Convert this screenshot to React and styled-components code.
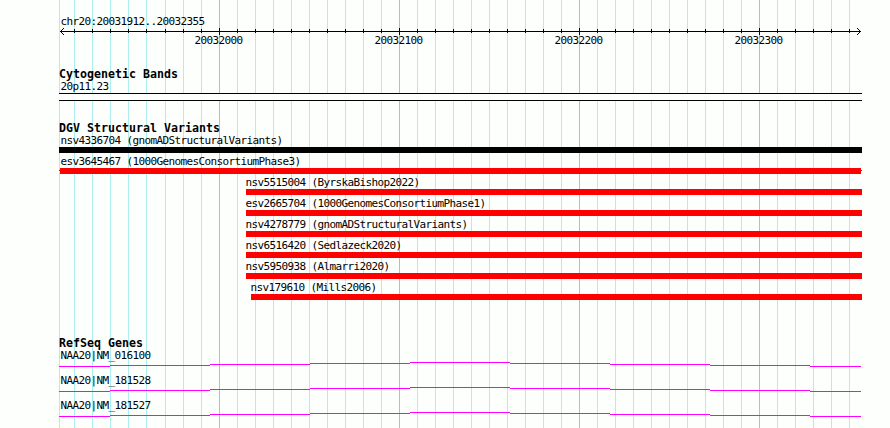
// App.jsx
import React from 'react';
import styled, { createGlobalStyle } from 'styled-components';

const LEFT = 59;
const RIGHT = 862;

const MINOR_TICKS = [
  74, 92, 110, 128, 146, 165, 183, 201, 237, 255, 273, 291, 309, 327, 345, 363,
  381, 417, 435, 453, 471, 489, 507, 525, 543, 561, 597, 615, 633, 651, 669,
  687, 705, 723, 741, 777, 795, 813, 831, 849,
];

const MAJOR_TICKS = [
  { x: 219, label: '20032000' },
  { x: 399, label: '20032100' },
  { x: 579, label: '20032200' },
  { x: 759, label: '20032300' },
];

const VARIANTS = [
  { name: 'nsv4336704', study: 'gnomADStructuralVariants', start: 59, color: '#000000' },
  { name: 'esv3645467', study: '1000GenomesConsortiumPhase3', start: 59, clipped: true },
  { name: 'nsv5515004', study: 'ByrskaBishop2022', start: 246 },
  { name: 'esv2665704', study: '1000GenomesConsortiumPhase1', start: 246 },
  { name: 'nsv4278779', study: 'gnomADStructuralVariants', start: 246 },
  { name: 'nsv6516420', study: 'Sedlazeck2020', start: 246 },
  { name: 'nsv5950938', study: 'Almarri2020', start: 246 },
  { name: 'nsv179610', study: 'Mills2006', start: 251 },
];

const GENES = ['NAA20|NM_016100', 'NAA20|NM_181528', 'NAA20|NM_181527'];

// each step of the intron line: [from, to, y]
const INTRON_STEPS = [
  [59, 110, 4],
  [110, 210, 3],
  [210, 310, 2],
  [310, 410, 1],
  [410, 510, 0],
  [510, 610, 1],
  [610, 710, 2],
  [710, 810, 3],
  [810, 861, 4],
];

const GridLines = () => (
  <GridLayer width="890" height="428" shapeRendering="crispEdges">
    {[LEFT, ...MINOR_TICKS].map((x) => (
      <rect key={x} x={x} y="0" width="1" height="428" fill="#afeeee" />
    ))}
    {MAJOR_TICKS.map(({ x }) => (
      <rect key={x} x={x} y="0" width="1" height="428" fill="#87ceeb" />
    ))}
  </GridLayer>
);

const Ruler = () => (
  <RulerBox>
    <Label>chr20:20031912..20032355</Label>
    <Axis
      width={RIGHT - LEFT}
      height="7"
      viewBox={`${LEFT} 0 ${RIGHT - LEFT} 7`}
      shapeRendering="crispEdges"
    >
      <rect x="60" y="3" width="801" height="1" />
      {MINOR_TICKS.map((x) => (
        <rect key={x} x={x} y="1" width="1" height="4" />
      ))}
      {MAJOR_TICKS.map(({ x }) => (
        <rect key={x} x={x} y="0" width="1" height="7" />
      ))}
      {[1, 2, 3].map((d) => (
        <React.Fragment key={d}>
          <rect x={60 + d} y={3 - d} width="1" height="1" />
          <rect x={60 + d} y={3 + d} width="1" height="1" />
          <rect x={860 - d} y={3 - d} width="1" height="1" />
          <rect x={860 - d} y={3 + d} width="1" height="1" />
        </React.Fragment>
      ))}
    </Axis>
    <TickLabels>
      {MAJOR_TICKS.map(({ x, label }) => (
        <TickLabel key={x}>{label}</TickLabel>
      ))}
    </TickLabels>
  </RulerBox>
);

const Variant = ({ name, study, start, color, clipped }) => (
  <VariantRow $start={start}>
    <Label $shift={start > LEFT ? -2 : 0}>
      {name} ({study})
    </Label>
    <Bar $color={color} $clipped={clipped} />
  </VariantRow>
);

const Gene = ({ name }) => (
  <GeneRow>
    <Label>{name}</Label>
    <Intron
      width={RIGHT - LEFT}
      height="5"
      viewBox={`${LEFT} 0 ${RIGHT - LEFT} 5`}
      shapeRendering="crispEdges"
    >
      {INTRON_STEPS.map(([from, to, y]) => (
        <rect key={from} x={from} y={y} width={to - from} height="1" />
      ))}
    </Intron>
  </GeneRow>
);

const App = () => (
  <Browser>
    <GlobalStyle />
    <GridLines />
    <Tracks>
      <Ruler />
      <Track $height={54}>
        <Title>Cytogenetic Bands</Title>
        <Label>20p11.23</Label>
        <Band />
      </Track>
      <Track $height={215}>
        <Title>DGV Structural Variants</Title>
        {VARIANTS.map((variant) => (
          <Variant key={variant.name} {...variant} />
        ))}
      </Track>
      <Track $height={91}>
        <Title>RefSeq Genes</Title>
        {GENES.map((name) => (
          <Gene key={name} name={name} />
        ))}
      </Track>
    </Tracks>
  </Browser>
);

const GlobalStyle = createGlobalStyle`
  body {
    margin: 0;
    background-color: #fdfffc;
  }
`;

const Browser = styled.div`
  position: relative;
  width: 890px;
  height: 428px;
  overflow: hidden;
  background-color: #fdfffc;
  color: #000;
  font-family: 'DejaVu Sans Mono', monospace;
  font-size: 11px;
`;

const GridLayer = styled.svg`
  position: absolute;
  top: 0;
  left: 0;
`;

const Tracks = styled.div`
  position: relative;
  display: flex;
  flex-direction: column;
  width: ${RIGHT - LEFT}px;
  padding: 15px 0 0 ${LEFT}px;
`;

const Label = styled.div`
  height: 13px;
  margin-left: ${({ $shift }) => $shift || 0}px;
  padding-left: 1.5px;
  line-height: 13px;
  letter-spacing: -0.622px;
  white-space: pre;
`;

const Title = styled.div`
  height: 12px;
  line-height: 13px;
  font-size: 11.6px;
  font-weight: bold;
  letter-spacing: 0.016px;
  white-space: pre;
`;

const RulerBox = styled.div`
  display: flex;
  flex-direction: column;
  height: 53px;
`;

const Axis = styled.svg`
  display: block;
  flex: none;
`;

const TickLabels = styled.div`
  display: flex;
  gap: 132px;
  margin-top: -1px;
  padding-left: 134px;
`;

const TickLabel = styled(Label)`
  width: 46.5px;
`;

const Track = styled.div`
  flex: none;
  height: ${({ $height }) => $height}px;
`;

const Band = styled.div`
  box-sizing: border-box;
  height: 8px;
  border: solid #000;
  border-width: 1px 0;
  background-color: #fdfffc;
`;

const VariantRow = styled.div`
  height: 21px;
  padding-left: ${({ $start }) => $start - LEFT}px;
`;

// a clipped bar is a pixel shorter at both ends, with a thin stub left there
const Bar = styled.div`
  height: 6px;
  background: ${({ $color, $clipped }) =>
    $clipped
      ? `linear-gradient(#ff0000, #ff0000) 1px 0 / 801px 6px no-repeat,
         linear-gradient(#ff0000, #ff0000) 0 2px / 803px 1px no-repeat`
      : $color || '#ff0000'};
`;

const GeneRow = styled.div`
  height: 25px;
`;

const Intron = styled.svg`
  display: block;
  fill: #ff00ff;
`;

export default App;
